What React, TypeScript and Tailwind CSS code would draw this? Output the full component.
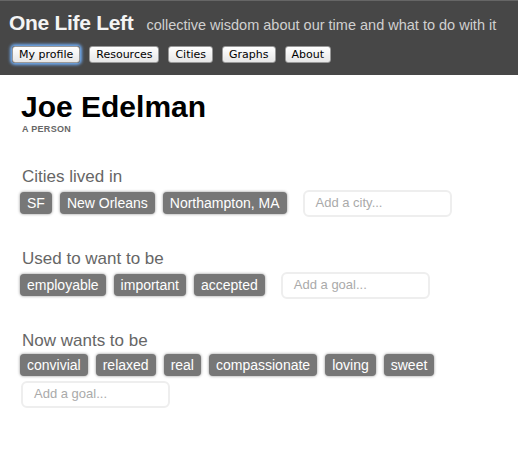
const tagCls =
  'inline-flex h-[22px] items-center rounded-[4px] bg-[#777777] px-[7px] text-[14px] leading-none text-white shadow-[0_0_3px_rgba(0,0,0,0.45)]'

function Tag({ label }: { label: string }) {
  return <span className={tagCls}>{label}</span>
}

function AddInput({ placeholder, className = '' }: { placeholder: string; className?: string }) {
  return (
    <div
      className={`flex h-[27px] w-[149px] items-center rounded-[6px] border-2 border-[#eeeeee] bg-white pl-[11px] text-[13px] text-[#aaaaaa] ${className}`}
    >
      {placeholder}
    </div>
  )
}

function Section({
  title,
  tags,
  placeholder,
  className = '',
}: {
  title: string
  tags: string[]
  placeholder: string
  className?: string
}) {
  return (
    <section className={className}>
      <h2 className="ml-[2px] text-[17px] leading-[20px] text-[#666666]">{title}</h2>
      <div className="mt-[3px] flex items-center gap-x-[8px]">
        {tags.map((t) => (
          <Tag key={t} label={t} />
        ))}
        <AddInput placeholder={placeholder} className="ml-[8px]" />
      </div>
    </section>
  )
}

export default function App() {
  const nav = ['My profile', 'Resources', 'Cities', 'Graphs', 'About']
  return (
    <div className="h-[454px] w-[518px] overflow-hidden bg-white font-['Liberation_Sans',Arial,sans-serif]">
      {/* Header */}
      <header className="h-[75px] border-t border-[#666666] bg-[#474747] pl-[9px]">
        <div className="flex items-baseline whitespace-nowrap pt-[10px]">
          <h1 className="text-[21px] font-bold leading-[24px] tracking-[-0.3px] text-[#f4f4f4]">One Life Left</h1>
          <span className="ml-[13px] text-[14.5px] text-[#d0d0d0]">
            collective wisdom about our time and what to do with it
          </span>
        </div>
        <nav className="ml-[3px] mt-[9px] flex gap-[9px] font-['DejaVu_Sans',sans-serif]">
          {nav.map((n, i) => (
            <button
              key={n}
              className={`h-[17px] rounded-[3px] border border-[#999999] bg-gradient-to-b from-white to-[#e6e6e6] px-[6px] text-[11px] leading-none text-black ${
                i === 0 ? 'shadow-[0_0_3px_2px_#6fa8ec]' : ''
              }`}
            >
              {n}
            </button>
          ))}
        </nav>
      </header>

      {/* Profile */}
      <main className="pl-[20px]">
        <h1 className="ml-[1px] mt-[16px] text-[30px] font-bold leading-[32px] text-black">Joe Edelman</h1>
        <div className="ml-[2px] text-[9px] font-bold tracking-[0.3px] text-[#666666]">A PERSON</div>

        <Section
          className="mt-[30px]"
          title="Cities lived in"
          tags={['SF', 'New Orleans', 'Northampton, MA']}
          placeholder="Add a city..."
        />
        <Section
          className="mt-[32px]"
          title="Used to want to be"
          tags={['employable', 'important', 'accepted']}
          placeholder="Add a goal..."
        />
        <section className="mt-[32px]">
          <h2 className="ml-[2px] text-[17px] leading-[20px] text-[#666666]">Now wants to be</h2>
          <div className="mt-[3px] flex items-center gap-x-[8px]">
            {['convivial', 'relaxed', 'real', 'compassionate', 'loving', 'sweet'].map((t) => (
              <Tag key={t} label={t} />
            ))}
          </div>
          <AddInput placeholder="Add a goal..." className="ml-[1px] mt-[5px]" />
        </section>
      </main>
    </div>
  )
}
